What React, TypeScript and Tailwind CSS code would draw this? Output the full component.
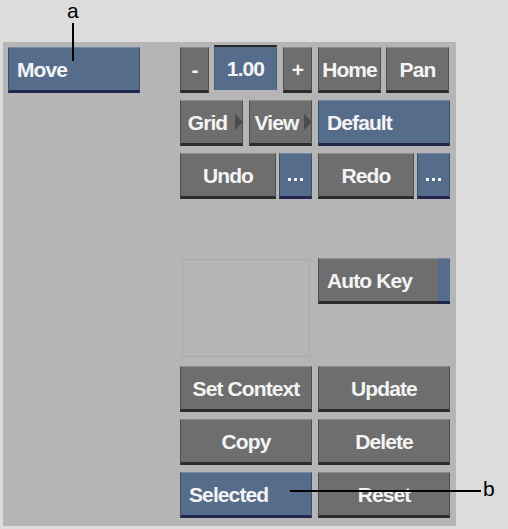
import React from "react";

type BtnProps = {
  label?: string;
  w: number;
  blue?: boolean;
  left?: boolean;
  arrow?: boolean;
  stripe?: boolean;
  dots?: boolean;
};

const widthClass: Record<number, string> = {
  29: "w-[29px]",
  63: "w-[63px]",
  96: "w-[96px]",
  33: "w-[33px]",
  132: "w-[132px]",
};

function Btn({ label, w, blue, left, arrow, stripe, dots }: BtnProps) {
  const base = blue
    ? "bg-[#566c8b] border-[#3f506b] border-t-[#7488a6] border-b-[#22264f]"
    : "bg-[#6e6e6e] border-[#4e4e4e] border-t-[#8e8e8e] border-b-[#2c2c2c]";
  return (
    <div
      className={`relative h-[46px] shrink-0 ${widthClass[w]} ${base} border border-b-[3px] flex items-center ${
        left ? "justify-start pl-[8px]" : "justify-center"
      } text-[#f4f4f4] text-[21px] font-bold tracking-[-0.9px] leading-none`}
    >
      {dots ? (
        <span className="flex gap-[3px] mt-[8px]">
          <span className="w-[3px] h-[3px] bg-[#f4f4f4]" />
          <span className="w-[3px] h-[3px] bg-[#f4f4f4]" />
          <span className="w-[3px] h-[3px] bg-[#f4f4f4]" />
        </span>
      ) : (
        <span className={arrow ? "mr-[8px]" : stripe ? "mr-[10px]" : ""}>{label}</span>
      )}
      {arrow && (
        <span className="absolute right-[-1px] top-[13px] w-0 h-0 border-y-[8px] border-y-transparent border-l-[8px] border-l-[#4c4c4c]" />
      )}
      {stripe && (
        <span className="absolute right-[-1px] top-[-1px] bottom-[-3px] w-[12px] bg-[#566c8b] border-t border-t-[#7488a6] border-b-[3px] border-b-[#22264f]" />
      )}
    </div>
  );
}

export default function App() {
  return (
    <div
      className="relative w-[508px] h-[529px] bg-[#dcdcdc] overflow-hidden"
      style={{ fontFamily: '"Liberation Sans", Arial, sans-serif' }}
    >
      <div className="h-[42px]" />
      <div className="ml-[3px] w-[453px] h-[484px] bg-[#b5b5b5] flex pt-[5px] pl-[5px]">
        <div className="w-[132px] shrink-0">
          <Btn label="Move" w={132} blue left />
        </div>
        <div className="ml-[40px] w-[271px] flex flex-col">
          <div className="flex items-start">
            <Btn label="-" w={29} />
            <div className="ml-[5px] -mt-[2px] w-[63px] h-[45px] bg-[#566c8b] border-t-[2px] border-t-[#2a2a2a] border-x border-x-[#4a5c78] flex items-center justify-center text-[#f4f4f4] text-[21px] font-bold tracking-[-0.9px] leading-none">
              1.00
            </div>
            <div className="ml-[6px]">
              <Btn label="+" w={29} />
            </div>
            <div className="ml-[6px]">
              <Btn label="Home" w={63} />
            </div>
            <div className="ml-[5px]">
              <Btn label="Pan" w={63} />
            </div>
          </div>
          <div className="flex gap-[6px] mt-[7px]">
            <Btn label="Grid" w={63} arrow />
            <Btn label="View" w={63} arrow />
            <Btn label="Default" w={132} blue left />
          </div>
          <div className="flex mt-[7px]">
            <Btn label="Undo" w={96} />
            <div className="ml-[3px]">
              <Btn w={33} blue dots />
            </div>
            <div className="ml-[6px]">
              <Btn label="Redo" w={96} />
            </div>
            <div className="ml-[3px]">
              <Btn w={33} blue dots />
            </div>
          </div>
          <div className="flex gap-[6px] mt-[59px] items-start">
            <div className="ml-[2px] w-[128px] h-[98px] border border-[#a9a9a9] mt-[1px]" />
            <div className="ml-[2px]">
              <Btn label="Auto Key" w={132} left stripe />
            </div>
          </div>
          <div className="flex gap-[6px] mt-[9px]">
            <Btn label="Set Context" w={132} />
            <Btn label="Update" w={132} />
          </div>
          <div className="flex gap-[6px] mt-[7px]">
            <Btn label="Copy" w={132} />
            <Btn label="Delete" w={132} />
          </div>
          <div className="flex gap-[6px] mt-[7px]">
            <Btn label="Selected" w={132} blue left />
            <Btn label="Reset" w={132} />
          </div>
        </div>
      </div>

      {/* annotation a */}
      <div className="absolute left-[67px] top-[0px] text-[21px] leading-none text-black">a</div>
      <div className="absolute left-[72px] top-[23px] w-[2px] h-[38px] bg-black" />
      {/* annotation b */}
      <div className="absolute left-[290px] top-[490px] w-[191px] h-[2px] bg-black" />
      <div className="absolute left-[483px] top-[478px] text-[21px] leading-none text-black">b</div>
    </div>
  );
}
